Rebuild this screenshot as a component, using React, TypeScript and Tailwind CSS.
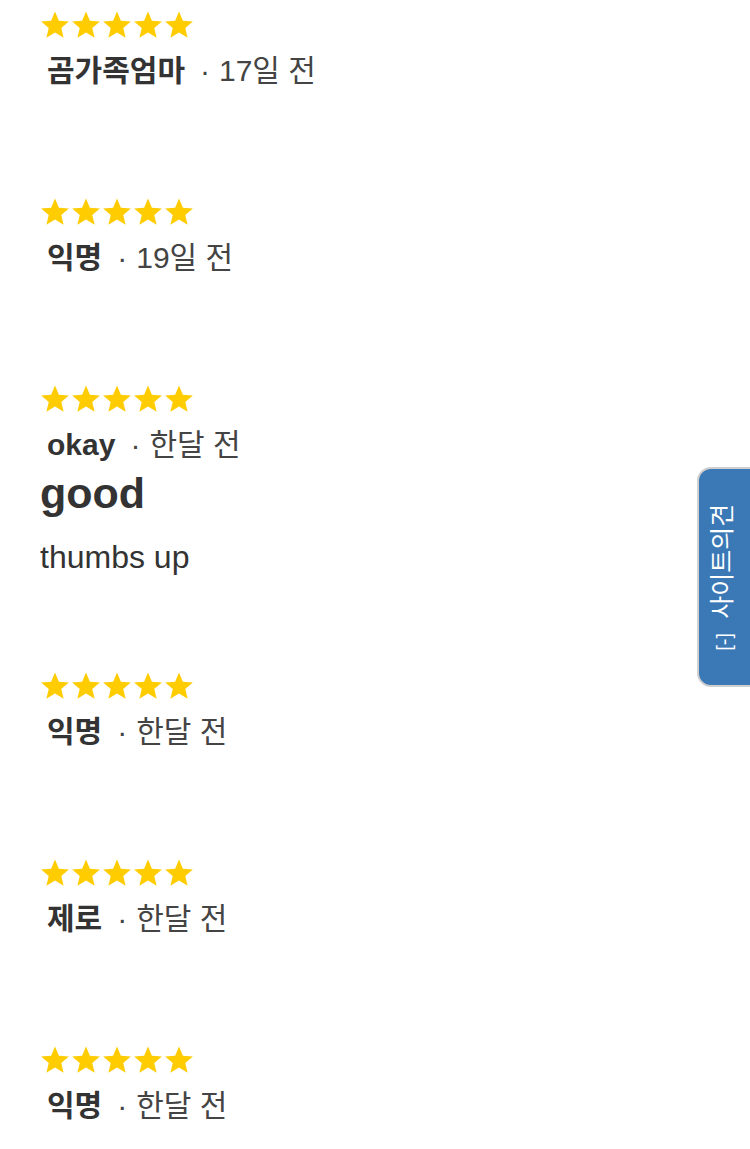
import React from 'react';

const reviews = [
  { name: '곰가족엄마', time: '17일 전' },
  { name: '익명', time: '19일 전' },
  { name: 'okay', time: '한달 전', title: 'good', body: 'thumbs up' },
  { name: '익명', time: '한달 전' },
  { name: '제로', time: '한달 전' },
  { name: '익명', time: '한달 전' },
];

function Star() {
  return (
    <svg width="30" height="30" viewBox="0 0 24 24" className="shrink-0">
      <path
        d="M12 1.2l3.1 7.4 8 .6-6.1 5.2 1.9 7.8L12 18l-6.9 4.2 1.9-7.8L.9 9.2l8-.6z"
        fill="#ffcc00"
      />
    </svg>
  );
}

export default function App() {
  return (
    <div
      className="relative h-[1149px] overflow-hidden bg-white text-[#333]"
      style={{ fontFamily: '"Liberation Sans", "Noto Sans CJK KR", sans-serif' }}
    >
      <div className="pl-[40px] pt-[10px]">
        {reviews.map((r, i) => (
          <div key={i} className={r.title ? 'pb-[94px]' : 'pb-[108px]'}>
            <div className="flex gap-[1px] h-[30px]">
              {[0, 1, 2, 3, 4].map((s) => (
                <Star key={s} />
              ))}
            </div>
            <div className="mt-[13px] pl-[7px] h-[36px] leading-[36px] text-[30px] whitespace-nowrap">
              <span className="font-bold">{r.name}</span>
              <span className="ml-[15px] text-[#444]">·</span>
              <span className="ml-[9px] text-[#444]">{r.time}</span>
            </div>
            {r.title && (
              <>
                <div className="mt-[6px] h-[48px] leading-[48px] text-[43px] font-bold">{r.title}</div>
                <div className="mt-[20px] h-[40px] leading-[40px] text-[32px]">{r.body}</div>
              </>
            )}
          </div>
        ))}
      </div>

      <div className="absolute top-[467px] right-[-10px] w-[63px] h-[220px] rounded-l-[14px] border-2 border-[#cfcfcf] bg-[#3b78b6] flex items-center justify-start pl-[9px]">
        <div className="[writing-mode:vertical-rl] [text-orientation:sideways] rotate-180 text-white text-[25px] leading-[28px] whitespace-nowrap">
          <span className="text-[20px]">[-]</span>
          <span className="mt-[14px] inline-block">사이트의견</span>
        </div>
      </div>
    </div>
  );
}
